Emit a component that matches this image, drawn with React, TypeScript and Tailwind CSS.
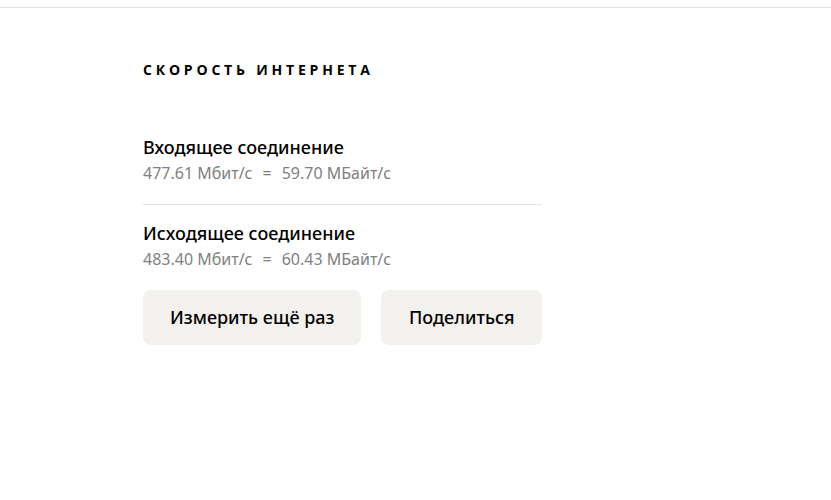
const rows = [
  { title: 'Входящее соединение', mbit: '477.61', mbyte: '59.70' },
  { title: 'Исходящее соединение', mbit: '483.40', mbyte: '60.43' },
]

export default function App() {
  return (
    <div className="min-h-[500px] w-[831px] bg-white" style={{ fontFamily: '"Noto Sans", sans-serif' }}>
      <div className="h-[8px] border-b border-[#e5e5e5]" />
      <div className="ml-[143px] w-[399px]">
        <h2
          className="mt-[53px] text-[14px] font-bold tracking-[3.8px] text-black leading-[18px]"
          style={{ fontFamily: '"Open Sans", sans-serif' }}
        >
          СКОРОСТЬ ИНТЕРНЕТА
        </h2>
        <div className="mt-[56px]">
          {rows.map((r, i) => (
            <div key={r.title} className={i > 0 ? 'border-t border-[#e5e5e5] pt-[16px]' : 'pb-[21px]'}>
              <div className="text-[18px] font-medium leading-[24px] text-black">{r.title}</div>
              <div className="mt-[4px] text-[16px] leading-[20px] text-[#7f7f7f]">
                {r.mbit} Мбит/с<span className="mx-[10px]">=</span>{r.mbyte} МБайт/с
              </div>
            </div>
          ))}
        </div>
        <div className="mt-[21px] flex gap-[20px]">
          <button className="h-[55px] w-[219px] rounded-[8px] bg-[#f2f1ed] text-[18px] font-medium text-black">
            Измерить ещё раз
          </button>
          <button className="h-[55px] w-[161px] rounded-[8px] bg-[#f2f1ed] text-[18px] font-medium text-black">
            Поделиться
          </button>
        </div>
      </div>
    </div>
  )
}
